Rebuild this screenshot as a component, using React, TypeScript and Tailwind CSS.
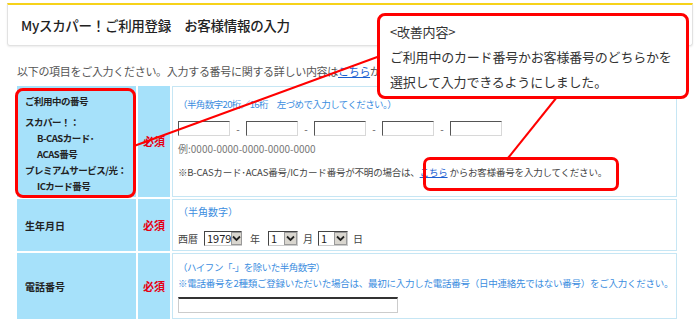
import React from 'react';

function TextBox({ w }: { w: string }) {
  return (
    <div
      className={`h-[15px] border border-t-[#555] border-l-[#555] border-r-[#d8d8d8] border-b-[#d8d8d8] bg-white ${w}`}
    />
  );
}

function Sel({ value, w }: { value: string; w: string }) {
  return (
    <div
      className={`flex h-[15px] border border-t-[#444] border-l-[#444] border-r-[#ccc] border-b-[#ccc] bg-white ${w}`}
    >
      <span className="flex-1 pl-[2px] text-[11px] leading-[13px] text-[#222]">{value}</span>
      <span className="flex w-[13px] items-center justify-center border border-[#999] bg-[#d9d6cf]">
        <svg width="9" height="7" viewBox="0 0 9 7">
          <path d="M1 1.5 L4.5 5 L8 1.5" fill="none" stroke="#222" strokeWidth="1.8" />
        </svg>
      </span>
    </div>
  );
}

function Hissu() {
  return <span className="text-[11px] font-bold text-[#e60012]">必須</span>;
}

export default function App() {
  return (
    <div className="relative h-[323px] w-[700px] overflow-hidden bg-white font-['Noto_Sans_CJK_JP',sans-serif] text-[#333]">
      {/* title */}
      <div className="mx-[7px] mt-[3px] flex h-[43px] items-center rounded-b-[3px] border border-t-2 border-[#e2e2e2] border-t-[#f6d21a] pl-[13px] shadow-[0_1px_2px_rgba(0,0,0,0.08)]">
        <h1 className="text-[13.5px] font-medium tracking-[-0.3px] text-[#222]">
          Myスカパー！ご利用登録　お客様情報の入力
        </h1>
      </div>

      <p className="ml-[17px] mt-[18px] text-[11px] leading-[14px] tracking-[-0.3px] text-[#555]">
        以下の項目をご入力ください。入力する番号に関する詳しい内容は
        <span className="text-[#1a5fd1] underline">こちら</span>から
      </p>

      {/* form table */}
      <div className="ml-[17px] mt-[8px] flex w-[660px] flex-col gap-[2px]">
        <div className="flex h-[111px] gap-[2px]">
          <div className="flex w-[119px] shrink-0 flex-col justify-center whitespace-nowrap bg-[#a6e1fa] pl-[8px] pt-[4px] text-[9.5px] font-bold leading-[16px] tracking-[-0.5px] text-[#222]">
            <div className="mb-[5px]">ご利用中の番号</div>
            <div>スカパー！：</div>
            <div className="pl-[12px]">B-CASカード･</div>
            <div className="pl-[12px]">ACAS番号</div>
            <div>プレミアムサービス/光：</div>
            <div className="pl-[12px]">ICカード番号</div>
          </div>
          <div className="flex w-[32px] shrink-0 items-center justify-center bg-[#a6e1fa]">
            <Hissu />
          </div>
          <div className="min-w-0 flex-1 border border-[#c6e6f4] pl-[5px] pt-[10px] text-[10px] leading-[14px]">
            <div className="text-[9.5px] tracking-[-0.6px] text-[#3b8de0]">（半角数字20桁／16桁　左づめで入力してください。）</div>
            <div className="mt-[10px] flex items-center gap-[5px] text-[#555]">
              <TextBox w="w-[52px]" />
              <span className="w-[6px] text-center">-</span>
              <TextBox w="w-[52px]" />
              <span className="w-[6px] text-center">-</span>
              <TextBox w="w-[52px]" />
              <span className="w-[6px] text-center">-</span>
              <TextBox w="w-[52px]" />
              <span className="w-[6px] text-center">-</span>
              <TextBox w="w-[52px]" />
            </div>
            <div className="mt-[6px] text-[#777]">例:0000-0000-0000-0000-0000</div>
            <div className="mt-[9px] whitespace-nowrap text-[9.5px] tracking-[-0.2px] text-[#444]">
              ※B-CASカード･ACAS番号/ICカード番号が不明の場合は、
              <span className="text-[#1a5fd1] underline">こちら</span> からお客様番号を入力してください。
            </div>
          </div>
        </div>

        <div className="flex h-[52px] gap-[2px]">
          <div className="flex w-[119px] shrink-0 items-center bg-[#a6e1fa] pl-[8px] text-[10px] font-bold text-[#222]">
            生年月日
          </div>
          <div className="flex w-[32px] shrink-0 items-center justify-center bg-[#a6e1fa]">
            <Hissu />
          </div>
          <div className="min-w-0 flex-1 border border-[#c6e6f4] pl-[5px] pt-[5px] text-[10px] leading-[14px]">
            <div className="text-[#3b8de0]">（半角数字）</div>
            <div className="mt-[12px] flex items-center text-[#444]">
              <span className="mr-[6px]">西暦</span>
              <Sel value="1979" w="w-[38px]" />
              <span className="mx-[8px]">年</span>
              <Sel value="1" w="w-[30px]" />
              <span className="mx-[5px]">月</span>
              <Sel value="1" w="w-[30px]" />
              <span className="ml-[5px]">日</span>
            </div>
          </div>
        </div>

        <div className="flex h-[66px] gap-[2px]">
          <div className="flex w-[119px] shrink-0 items-center bg-[#a6e1fa] pl-[8px] text-[10px] font-bold text-[#222]">
            電話番号
          </div>
          <div className="flex w-[32px] shrink-0 items-center justify-center bg-[#a6e1fa]">
            <Hissu />
          </div>
          <div className="min-w-0 flex-1 whitespace-nowrap border border-[#c6e6f4] pl-[5px] pt-[5px] text-[9.5px] leading-[16px] tracking-[-0.25px] text-[#3b8de0]">
            <div className="tracking-[-0.5px]">（ハイフン「-」を除いた半角数字）</div>
            <div>※電話番号を2種類ご登録いただいた場合は、最初に入力した電話番号（日中連絡先ではない番号）をご入力ください。</div>
            <div className="mt-[6px] h-[16px] w-[220px] border border-[#ccc] border-t-2 border-t-[#333] bg-white" />
          </div>
        </div>
      </div>

      {/* annotations */}
      <svg className="pointer-events-none absolute left-0 top-0" width="700" height="323">
        <line x1="134" y1="146" x2="380" y2="56" stroke="#ff0000" strokeWidth="2" />
        <line x1="557" y1="97" x2="508" y2="158" stroke="#ff0000" strokeWidth="2" />
      </svg>
      <div className="pointer-events-none absolute left-[15px] top-[88px] h-[110px] w-[121px] rounded-[8px] border-[3px] border-[#ff0000]" />
      <div className="pointer-events-none absolute left-[423px] top-[157px] h-[34px] w-[196px] rounded-[7px] border-[3px] border-[#ff0000]" />
      <div className="absolute left-[377px] top-[13px] h-[86px] w-[312px] rounded-[8px] border-[3px] border-[#ff0000] bg-white pl-[10px] pt-[3px] text-[13px] leading-[25px] tracking-[-0.2px] text-[#333]">
        <div>&lt;改善内容&gt;</div>
        <div>ご利用中のカード番号かお客様番号のどちらかを</div>
        <div>選択して入力できるようにしました。</div>
      </div>
    </div>
  );
}
